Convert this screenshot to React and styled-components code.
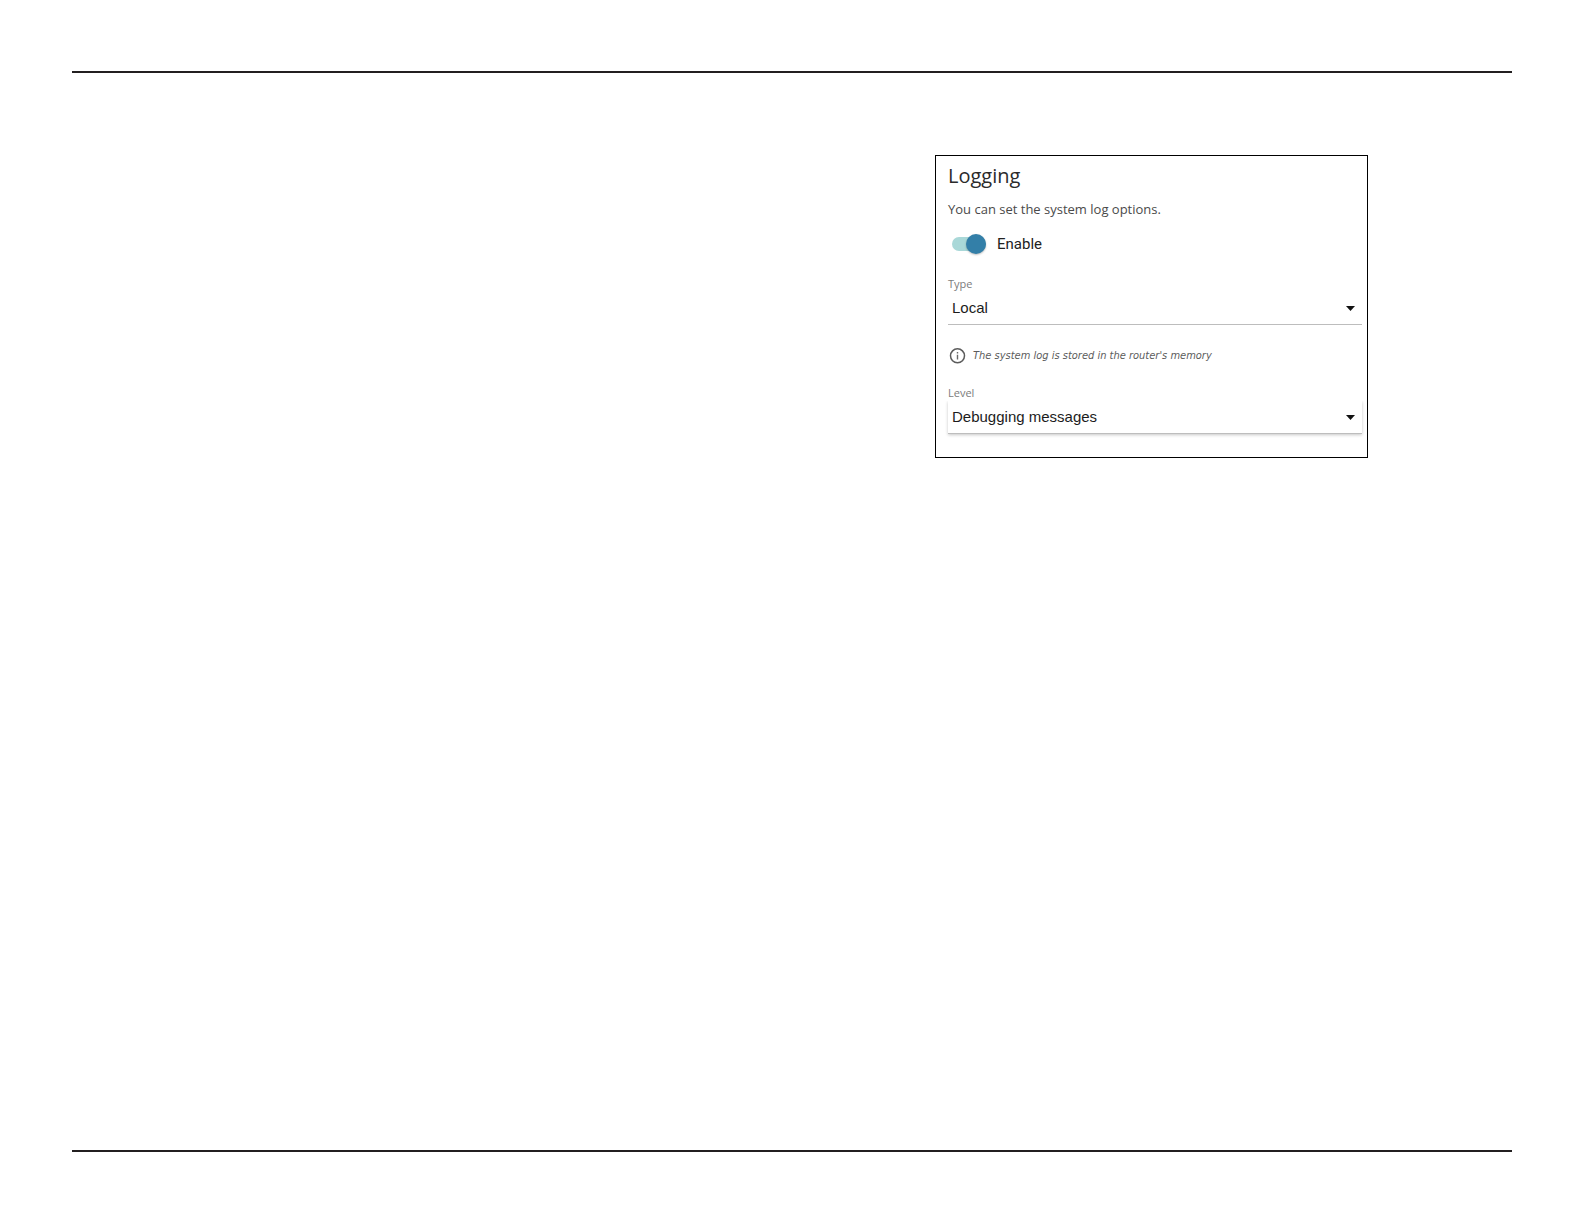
import React, { useState } from "react";
import styled, { createGlobalStyle } from "styled-components";

const GlobalStyle = createGlobalStyle`
  *, *::before, *::after { box-sizing: border-box; }
  body { margin: 0; background: #fff; }
`;

const Page = styled.div`
  min-height: 100vh;
  display: flex;
  flex-direction: column;
  padding: 71px 72px 72px;
  font-family: "Open Sans", "Noto Sans", sans-serif;
`;

const Rule = styled.hr`
  width: 100%;
  height: 2px;
  margin: 0;
  border: 0;
  background: #231f20;
`;

const Main = styled.main`
  flex: 1;
  display: flex;
  justify-content: flex-end;
  align-items: flex-start;
  padding: 82px 10% 24px 0;
`;

const Card = styled.section`
  width: 100%;
  max-width: 433px;
  padding: 6px 5px 23px 12px;
  border: 1px solid #000;
  background: #fff;
`;

const Title = styled.h1`
  margin: 0;
  font-size: 20px;
  font-weight: 400;
  line-height: 28px;
  color: #2b2b2b;
`;

const Description = styled.p`
  margin: 9px 0 13px;
  font-size: 13px;
  line-height: 20px;
  color: #4a4a4a;
`;

const SwitchLabel = styled.label`
  display: flex;
  align-items: center;
  gap: 11px;
  width: fit-content;
  padding-left: 4px;
  font-family: Roboto, sans-serif;
  font-size: 15px;
  line-height: 24px;
  color: #222;
  cursor: pointer;
`;

const SwitchInput = styled.input`
  appearance: none;
  display: flex;
  align-items: center;
  width: 34px;
  height: 14px;
  margin: 0;
  border-radius: 7px;
  background: #a9d8d8;
  cursor: pointer;

  &::before {
    content: "";
    width: 20px;
    height: 20px;
    flex: none;
    border-radius: 50%;
    background: #8a9499;
    box-shadow: 0 1px 2px rgba(0, 0, 0, 0.25);
  }

  &:checked {
    justify-content: flex-end;
  }

  &:checked::before {
    background: #337fa8;
  }
`;

const Field = styled.div`
  margin-top: 20px;
`;

const FieldLabel = styled.label`
  display: block;
  font-size: 11px;
  line-height: 16px;
  color: #7c7c7c;
`;

const SelectBox = styled.div`
  position: relative;
  box-shadow: ${(p) => (p.$raised ? "0 1px 3px rgba(0, 0, 0, 0.22)" : "none")};
  clip-path: inset(0 -4px -5px -4px);
`;

const Select = styled.select`
  appearance: none;
  display: block;
  width: 100%;
  height: 33px;
  padding: 0 28px 2px 4px;
  border: 0;
  border-bottom: 1px solid #bdbdbd;
  border-radius: 0;
  background: transparent;
  font-family: "Liberation Sans", Arial, sans-serif;
  font-size: 15px;
  color: #1c1c1c;
`;

const Caret = styled.svg`
  position: absolute;
  top: 14px;
  right: 7px;
  width: 9px;
  height: 5px;
  pointer-events: none;
`;

const Hint = styled.p`
  display: flex;
  align-items: center;
  gap: 7px;
  margin: 23px 0 21px;
  padding-left: 1px;
  font-family: "DejaVu Sans Condensed", "DejaVu Sans", sans-serif;
  font-size: 11px;
  font-style: italic;
  line-height: 16px;
  color: #5c5c5c;
`;

const InfoIcon = () => (
  <svg width="17" height="16" viewBox="0 0 17 16" fill="none" aria-hidden="true">
    <circle cx="8.5" cy="7.8" r="7" stroke="#5c5c5c" strokeWidth="1.5" />
    <path d="M8.5 4.1v1.5M8.5 6.8v4.7" stroke="#6a6a6a" strokeWidth="1.4" />
  </svg>
);

function SelectField({ id, label, options, raised }) {
  return (
    <Field>
      <FieldLabel htmlFor={id}>{label}</FieldLabel>
      <SelectBox $raised={raised}>
        <Select id={id} defaultValue={options[0]}>
          {options.map((option) => (
            <option key={option}>{option}</option>
          ))}
        </Select>
        <Caret viewBox="0 0 10 5" preserveAspectRatio="none" aria-hidden="true">
          <path d="M0 0h10L5 5z" fill="#111" />
        </Caret>
      </SelectBox>
    </Field>
  );
}

export default function App() {
  const [enabled, setEnabled] = useState(true);
  return (
    <>
      <GlobalStyle />
      <Page>
        <Rule />
        <Main>
          <Card>
            <Title>Logging</Title>
            <Description>You can set the system log options.</Description>
            <SwitchLabel>
              <SwitchInput
                type="checkbox"
                role="switch"
                checked={enabled}
                onChange={(e) => setEnabled(e.target.checked)}
              />
              Enable
            </SwitchLabel>
            <SelectField id="log-type" label="Type" options={["Local"]} />
            <Hint>
              <InfoIcon />
              The system log is stored in the router's memory
            </Hint>
            <SelectField
              id="log-level"
              label="Level"
              options={["Debugging messages"]}
              raised
            />
          </Card>
        </Main>
        <Rule />
      </Page>
    </>
  );
}
